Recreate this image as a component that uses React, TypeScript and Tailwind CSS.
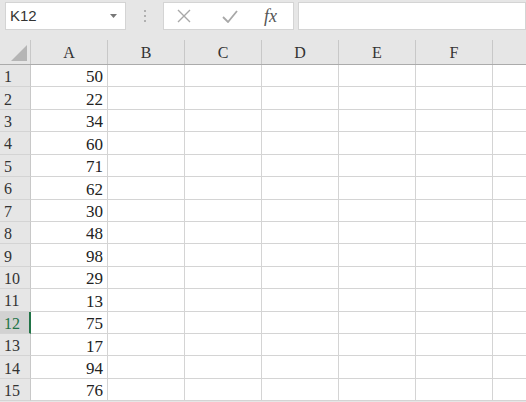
import React from 'react';

const values = [50, 22, 34, 60, 71, 62, 30, 48, 98, 29, 13, 75, 17, 94, 76];
const cols = ['A', 'B', 'C', 'D', 'E', 'F', ''];
const serif = { fontFamily: '"Liberation Serif", "Times New Roman", "DejaVu Serif", serif' };

export default function App() {
  return (
    <div className="w-[526px] h-[402px] overflow-hidden bg-[#e6e6e6] select-none">
      {/* Formula bar */}
      <div className="h-[40px] flex items-start pt-[2px]">
        <div className="ml-[5px] w-[121px] h-[28px] bg-white border border-[#d4d4d4] flex items-center justify-between pl-[4px] pr-[8px]">
          <span className="text-[15px] text-[#333]" style={{ fontFamily: '"Liberation Sans", Arial, sans-serif' }}>K12</span>
          <svg width="7" height="4" viewBox="0 0 7 4"><path d="M0 0 L7 0 L3.5 4 Z" fill="#777" /></svg>
        </div>
        <div className="w-[37px] h-[28px] flex flex-col items-center justify-center gap-[3px]">
          <span className="w-[2px] h-[2px] bg-[#b0b0b0]" />
          <span className="w-[2px] h-[2px] bg-[#b0b0b0]" />
          <span className="w-[2px] h-[2px] bg-[#b0b0b0]" />
        </div>
        <div className="w-[131px] h-[28px] bg-white border border-[#d4d4d4] flex items-center">
          <svg className="ml-[13px]" width="14" height="14" viewBox="0 0 14 14">
            <path d="M1 1 L13 13 M13 1 L1 13" stroke="#a8a8a8" strokeWidth="1.4" />
          </svg>
          <svg className="ml-[31px]" width="16" height="13" viewBox="0 0 16 13">
            <path d="M1 7 L6 12 L15 1" stroke="#a8a8a8" strokeWidth="1.8" fill="none" />
          </svg>
          <span className="ml-[26px] text-[18px] italic text-[#555] leading-none" style={serif}>fx</span>
        </div>
        <div className="ml-[4px] flex-1 h-[28px] bg-white border border-[#d4d4d4]" />
      </div>

      {/* Column headers */}
      <div className="flex h-[25px] border-b border-[#ababab]" style={serif}>
        <div className="w-[31px] shrink-0 border-r border-[#c8c8c8] relative">
          <svg className="absolute right-[3px] bottom-[3px]" width="16" height="16" viewBox="0 0 16 16">
            <path d="M16 0 L16 16 L0 16 Z" fill="#b5b5b5" />
          </svg>
        </div>
        {cols.map((c, i) => (
          <div key={i} className="w-[77px] shrink-0 border-r border-[#c8c8c8] flex items-center justify-center pt-[2px] text-[16px] text-[#333]">
            {c}
          </div>
        ))}
      </div>

      {/* Rows */}
      <div style={serif}>
        {values.map((v, i) => {
          const active = i === 11;
          return (
            <div key={i} className="flex h-[22.43px]">
              <div
                className={`w-[31px] shrink-0 border-b border-[#d4d4d4] flex items-center pl-[4px] pt-[3px] text-[16px] ${
                  active ? 'bg-[#d2d2d2] text-[#217346] border-r-2 border-r-[#217346]' : 'bg-[#e6e6e6] text-[#333] border-r border-r-[#c8c8c8]'
                }`}
              >
                {i + 1}
              </div>
              <div className="w-[77px] shrink-0 bg-white border-b border-r border-[#d4d4d4] flex items-center justify-end pr-[4px] pt-[3px] text-[17px] text-[#222]">
                {v}
              </div>
              {cols.slice(1).map((c, j) => (
                <div key={j} className="w-[77px] shrink-0 bg-white border-b border-r border-[#d4d4d4]" />
              ))}
            </div>
          );
        })}
      </div>
    </div>
  );
}
